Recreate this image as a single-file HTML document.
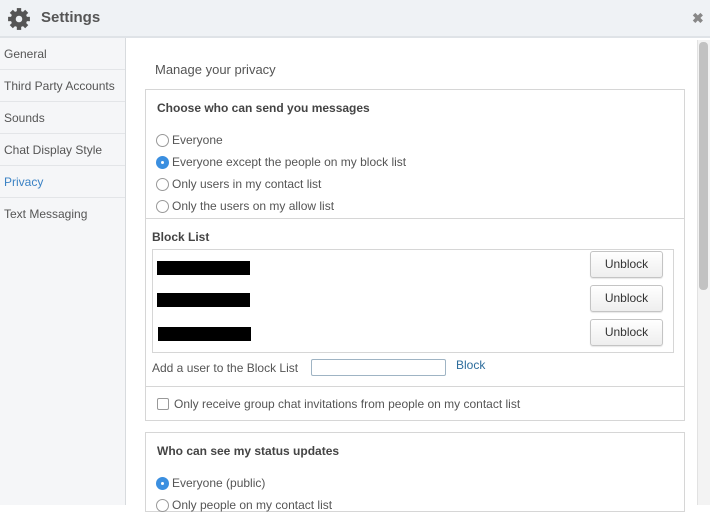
<!DOCTYPE html><html><head><style>
*{margin:0;padding:0;box-sizing:border-box}
body{width:710px;height:505px;overflow:hidden;font-family:"Liberation Sans",Arial,sans-serif;font-size:12px;color:#555;background:#fff;position:relative}
.a{position:absolute;white-space:nowrap}
.hdr{left:0;top:0;width:710px;height:38px;background:#eff2f5;border-bottom:2px solid #dfe3e7}
.side{left:0;top:38px;width:126px;height:467px;background:#f5f6f8;border-right:1px solid #d8dbde}
.it{left:0;width:125px;height:32px;border-bottom:1px solid #e3e5e8;padding:9px 0 0 4px;color:#555}
.box{border:1px solid #d6d6d6;background:#fff}
.r{width:13px;height:13px;border:1px solid #999;border-radius:50%;background:#fff}
.r.on{background:#3b8fe0;border-color:#3b8fe0}
.r.on:after{content:"";position:absolute;left:4px;top:4px;width:3px;height:3px;background:#fff;border-radius:50%}
.btn{width:73px;height:27px;border:1px solid #c4c4c4;border-radius:3px;background:linear-gradient(#fff,#eee);color:#333;text-align:center;line-height:25px;box-shadow:0 1px 1px rgba(0,0,0,.1)}
.red{height:14px;width:93px;background:#000}
b{color:#444}
</style></head><body>
<div class="a hdr"></div>
<svg class="a" style="left:7px;top:7px" width="24" height="24" viewBox="0 0 22 22"><g fill="#555"><circle cx="11" cy="11" r="7.5"/><rect x="9" y="1" width="4" height="20"/><rect x="9" y="1" width="4" height="20" transform="rotate(45 11 11)"/><rect x="9" y="1" width="4" height="20" transform="rotate(90 11 11)"/><rect x="9" y="1" width="4" height="20" transform="rotate(135 11 11)"/></g><circle cx="11" cy="11" r="3" fill="#eff2f5"/></svg>
<div class="a" style="left:41px;top:9px;font-size:15px;font-weight:bold;color:#555">Settings</div>
<div class="a" style="left:692px;top:10px;font-size:14px;font-weight:bold;color:#888">✖</div>
<div class="a side"></div>
<div class="a it" style="top:38px">General</div>
<div class="a it" style="top:70px">Third Party Accounts</div>
<div class="a it" style="top:102px">Sounds</div>
<div class="a it" style="top:134px">Chat Display Style</div>
<div class="a it" style="top:166px;color:#3b82c4">Privacy</div>
<div class="a it" style="top:198px;border:none">Text Messaging</div>
<div class="a" style="left:697px;top:40px;width:13px;height:465px;background:#f3f3f3;border-left:1px solid #e2e2e2"></div>
<div class="a" style="left:699px;top:42px;width:9px;height:248px;background:#c2c2c2;border-radius:4px"></div>
<div class="a" style="left:155px;top:62px;font-size:13px">Manage your privacy</div>
<div class="a box" style="left:145px;top:89px;width:540px;height:332px"></div>
<div class="a" style="left:157px;top:101px"><b>Choose who can send you messages</b></div>
<div class="a r" style="left:156px;top:134px"></div><div class="a" style="left:172px;top:133px">Everyone</div>
<div class="a r on" style="left:156px;top:156px"></div><div class="a" style="left:172px;top:155px">Everyone except the people on my block list</div>
<div class="a r" style="left:156px;top:178px"></div><div class="a" style="left:172px;top:177px">Only users in my contact list</div>
<div class="a r" style="left:156px;top:200px"></div><div class="a" style="left:172px;top:199px">Only the users on my allow list</div>
<div class="a" style="left:146px;top:218px;width:538px;height:1px;background:#d6d6d6"></div>
<div class="a" style="left:152px;top:230px"><b>Block List</b></div>
<div class="a box" style="left:152px;top:249px;width:522px;height:104px"></div>
<div class="a red" style="left:157px;top:261px"></div>
<div class="a red" style="left:157px;top:293px"></div>
<div class="a red" style="left:158px;top:327px"></div>
<div class="a btn" style="left:590px;top:251px">Unblock</div>
<div class="a btn" style="left:590px;top:285px">Unblock</div>
<div class="a btn" style="left:590px;top:319px">Unblock</div>
<div class="a" style="left:152px;top:361px">Add a user to the Block List</div>
<div class="a" style="left:311px;top:359px;width:135px;height:17px;border:1px solid #9fb4c4;border-radius:2px"></div>
<div class="a" style="left:456px;top:358px;color:#2d6d9c">Block</div>
<div class="a" style="left:146px;top:386px;width:538px;height:1px;background:#d6d6d6"></div>
<div class="a" style="left:157px;top:398px;width:12px;height:12px;border:1px solid #999;border-radius:2px"></div>
<div class="a" style="left:174px;top:397px">Only receive group chat invitations from people on my contact list</div>
<div class="a box" style="left:145px;top:432px;width:540px;height:80px"></div>
<div class="a" style="left:157px;top:444px"><b>Who can see my status updates</b></div>
<div class="a r on" style="left:156px;top:477px"></div><div class="a" style="left:172px;top:476px">Everyone (public)</div>
<div class="a r" style="left:156px;top:499px"></div><div class="a" style="left:172px;top:498px">Only people on my contact list</div>
</body></html>
